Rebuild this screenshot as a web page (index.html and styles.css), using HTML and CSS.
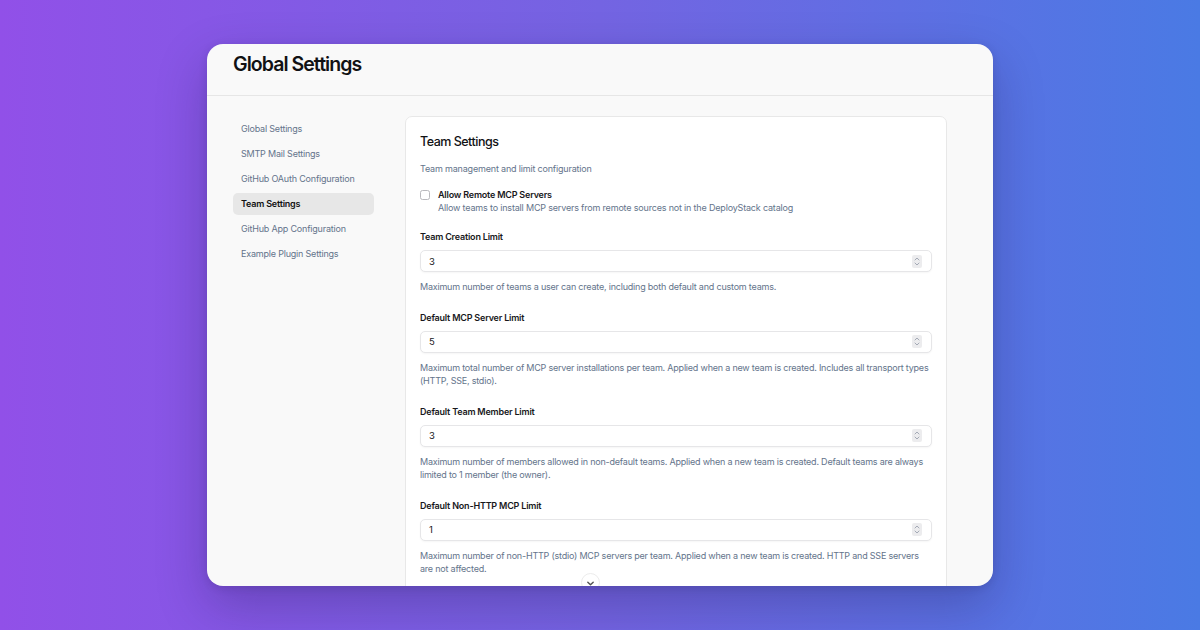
FILE: index.html
```html
<!DOCTYPE html>
<html>
<head>
<meta charset="utf-8">
<link rel="stylesheet" href="styles.css">
</head>
<body>
<div class="stage">
  <div class="window">
    <header class="header"><h1 class="page-title">Global Settings</h1></header>
    <div class="body">
      <nav class="sidebar">
        <div class="nav-item">Global Settings</div>
        <div class="nav-item">SMTP Mail Settings</div>
        <div class="nav-item">GitHub OAuth Configuration</div>
        <div class="nav-item active">Team Settings</div>
        <div class="nav-item">GitHub App Configuration</div>
        <div class="nav-item">Example Plugin Settings</div>
      </nav>
      <section class="card">
        <h2 class="card-title">Team Settings</h2>
        <p class="card-sub">Team management and limit configuration</p>
        <div class="check-row">
          <span class="checkbox"></span>
          <div class="check-text">
            <div class="check-label">Allow Remote MCP Servers</div>
            <div class="check-desc">Allow teams to install MCP servers from remote sources not in the DeployStack catalog</div>
          </div>
        </div>
        <div class="field">
          <div class="field-label">Team Creation Limit</div>
          <div class="input"><span class="value">3</span><span class="spinner"><svg viewBox="0 0 10 13" width="10" height="13"><path d="M3 5 L5 3 L7 5 M3 8 L5 10 L7 8" fill="none" stroke="#9ca3af" stroke-width="0.9" stroke-linecap="round" stroke-linejoin="round"/></svg></span></div>
          <p class="help">Maximum number of teams a user can create, including both default and custom teams.</p>
        </div>
        <div class="field">
          <div class="field-label">Default MCP Server Limit</div>
          <div class="input"><span class="value">5</span><span class="spinner"><svg viewBox="0 0 10 13" width="10" height="13"><path d="M3 5 L5 3 L7 5 M3 8 L5 10 L7 8" fill="none" stroke="#9ca3af" stroke-width="0.9" stroke-linecap="round" stroke-linejoin="round"/></svg></span></div>
          <p class="help">Maximum total number of MCP server installations per team. Applied when a new team is created. Includes all transport types (HTTP, SSE, stdio).</p>
        </div>
        <div class="field">
          <div class="field-label">Default Team Member Limit</div>
          <div class="input"><span class="value">3</span><span class="spinner"><svg viewBox="0 0 10 13" width="10" height="13"><path d="M3 5 L5 3 L7 5 M3 8 L5 10 L7 8" fill="none" stroke="#9ca3af" stroke-width="0.9" stroke-linecap="round" stroke-linejoin="round"/></svg></span></div>
          <p class="help">Maximum number of members allowed in non-default teams. Applied when a new team is created. Default teams are always limited to 1 member (the owner).</p>
        </div>
        <div class="field">
          <div class="field-label">Default Non-HTTP MCP Limit</div>
          <div class="input"><span class="value">1</span><span class="spinner"><svg viewBox="0 0 10 13" width="10" height="13"><path d="M3 5 L5 3 L7 5 M3 8 L5 10 L7 8" fill="none" stroke="#9ca3af" stroke-width="0.9" stroke-linecap="round" stroke-linejoin="round"/></svg></span></div>
          <p class="help">Maximum number of non-HTTP (stdio) MCP servers per team. Applied when a new team is created. HTTP and SSE servers are not affected.</p>
        </div>
      </section>
    </div>
    <div class="scroll-btn"><svg viewBox="0 0 19 19" width="19" height="19"><path d="M6.5 8 L9.5 11 L12.5 8" fill="none" stroke="#555" stroke-width="1.6" stroke-linecap="round" stroke-linejoin="round"/></svg></div>
  </div>
</div>
</body>
</html>
```
FILE: styles.css
```css
* { box-sizing: border-box; }
html, body { margin: 0; padding: 0; }
body {
  width: 1200px;
  height: 630px;
  overflow: hidden;
  background: linear-gradient(90deg, #9150e8 0%, #7464e2 50%, #4a7ae4 100%);
  font-family: Inter, "Noto Sans", "Liberation Sans", sans-serif;
  color: #18181b;
}
.stage {
  padding: 44px 207px 0 207px;
}
.window {
  position: relative;
  width: 786px;
  height: 542px;
  background: #f9f9f9;
  border-radius: 16px;
  overflow: hidden;
  box-shadow: 0 20px 50px rgba(20, 10, 60, 0.25), 0 2px 8px rgba(20, 10, 60, 0.12);
}
.header {
  height: 52px;
  border-bottom: 1px solid #e6e6e6;
  padding: 8px 26px 0;
}
.page-title {
  margin: 0;
  font-size: 19.5px;
  line-height: 24px;
  font-weight: 600;
  letter-spacing: -0.95px;
  color: #111114;
}
.body {
  display: flex;
  gap: 31px;
  padding: 20px 46px 0 26px;
}
.sidebar {
  width: 141px;
  flex-shrink: 0;
  display: flex;
  flex-direction: column;
  gap: 3px;
  padding-top: 2px;
}
.nav-item {
  height: 22px;
  line-height: 22px;
  padding: 0 8px;
  font-size: 9px;
  letter-spacing: -0.2px;
  color: #64748b;
  border-radius: 5px;
  white-space: nowrap;
}
.nav-item.active {
  background: #e7e7e7;
  color: #111;
  font-weight: 600;
}
.card {
  flex: 1;
  background: #fff;
  border: 1px solid #e8e8e8;
  border-radius: 7px;
  padding: 17px 14px 20px;
}
.card-title {
  margin: 0;
  font-size: 12.5px;
  line-height: 16px;
  font-weight: 500;
  letter-spacing: -0.5px;
  color: #111114;
}
.card-sub {
  margin: 12px 0 0;
  font-size: 9px;
  line-height: 13px;
  letter-spacing: -0.18px;
  color: #64748b;
}
.check-row {
  display: flex;
  gap: 8px;
  margin-top: 13px;
}
.checkbox {
  width: 10px;
  height: 10px;
  margin-top: 1.5px;
  border: 1px solid #b9b9bd;
  border-radius: 2.5px;
  background: #fff;
  flex-shrink: 0;
}
.check-label {
  font-size: 9px;
  line-height: 13px;
  font-weight: 600;
  letter-spacing: -0.2px;
  color: #18181b;
}
.check-desc {
  font-size: 9px;
  line-height: 14px;
  letter-spacing: -0.18px;
  color: #64748b;
}
.field {
  margin-top: 15px;
}
.field + .field {
  margin-top: 17px;
}
.field-label {
  font-size: 9px;
  line-height: 13px;
  font-weight: 600;
  letter-spacing: -0.2px;
  color: #18181b;
}
.input {
  margin-top: 7px;
  height: 22px;
  border: 1px solid #e6e6e8;
  border-radius: 5px;
  box-shadow: 0 1px 2px rgba(0, 0, 0, 0.04);
  display: flex;
  align-items: center;
  justify-content: space-between;
  padding: 0 9px 0 8px;
  background: #fff;
}
.value {
  font-size: 9.5px;
  color: #18181b;
}
.spinner {
  width: 10px;
  height: 13px;
  background: #ececee;
  border-radius: 2px;
  display: flex;
}
.help {
  margin: 8px 0 0;
  font-size: 9px;
  line-height: 13.5px;
  letter-spacing: -0.21px;
  color: #64748b;
}
.scroll-btn {
  position: absolute;
  left: 374px;
  top: 529px;
  width: 19px;
  height: 19px;
  border-radius: 50%;
  background: #fff;
  border: 1px solid #ececec;
  display: flex;
}
```
